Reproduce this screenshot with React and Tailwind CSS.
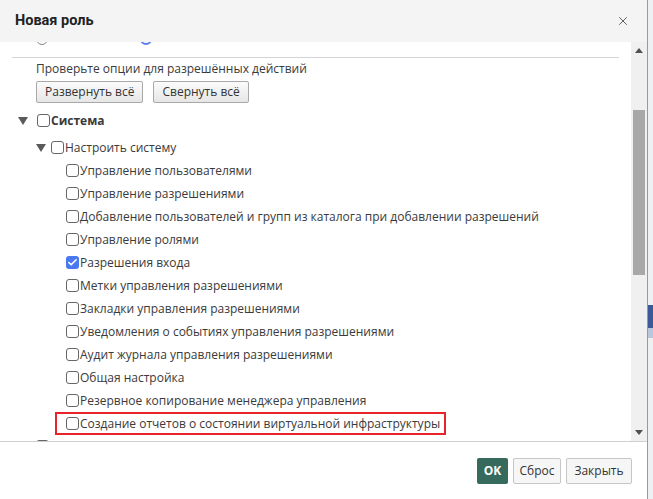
import { Check, X } from 'lucide-react'

const items = [
  { label: 'Управление пользователями' },
  { label: 'Управление разрешениями' },
  { label: 'Добавление пользователей и групп из каталога при добавлении разрешений' },
  { label: 'Управление ролями' },
  { label: 'Разрешения входа', checked: true },
  { label: 'Метки управления разрешениями' },
  { label: 'Закладки управления разрешениями' },
  { label: 'Уведомления о событиях управления разрешениями' },
  { label: 'Аудит журнала управления разрешениями' },
  { label: 'Общая настройка' },
  { label: 'Резервное копирование менеджера управления' },
  { label: 'Создание отчетов о состоянии виртуальной инфраструктуры', marked: true },
]

function Box({ checked }) {
  if (checked) {
    return (
      <span className="flex h-[13px] w-[13px] shrink-0 items-center justify-center rounded-[3px] bg-[#4a78f0]">
        <Check size={11} strokeWidth={3.5} className="text-white" />
      </span>
    )
  }
  return <span className="block h-[13px] w-[13px] shrink-0 rounded-[3px] border border-[#666] bg-white" />
}

function Caret() {
  return (
    <svg width="10" height="8" viewBox="0 0 10 8" className="shrink-0">
      <path d="M0 0 L10 0 L5 8 Z" fill="#5a5a5a" />
    </svg>
  )
}

export default function App() {
  return (
    <div className="flex h-[499px] w-[653px] bg-[#eef0f2] font-['Open_Sans',sans-serif] text-[12px] text-[#3a3a3a]">
      <div className="flex w-[648px] flex-col border-r border-[#9a9a9a] bg-white">
        <header className="flex h-[42px] shrink-0 items-center justify-between bg-[#f4f4f4] pl-[15px] pr-[17px]">
          <h1 className="font-['Roboto',sans-serif] text-[14.5px] font-bold text-[#222]">Новая роль</h1>
          <X size={14} strokeWidth={1.6} className="text-[#555]" />
        </header>

        <div className="flex min-h-0 flex-1">
          <div className="min-w-0 flex-1 overflow-hidden">
            <div className="mx-[12px] flex h-[16px] items-start gap-[92px] overflow-hidden border-b border-[#d4d4d8] pl-[24px]">
              <div className="mt-[-9px] h-[12px] w-[12px] shrink-0 rounded-full border border-[#888]" />
              <div className="mt-[-9px] h-[12px] w-[12px] shrink-0 rounded-full border-2 border-[#5a7cf0]" />
            </div>

            <div className="pl-[36px]">
              <p className="mt-[2px] leading-[18px]">Проверьте опции для разрешённых действий</p>
              <div className="mt-[3px] flex gap-[10px]">
                <button className="h-[22px] rounded-[2px] border border-[#a9a9a9] bg-gradient-to-b from-[#fbfbfb] to-[#e6e6e6] px-[8px] text-[12px] text-[#333]">
                  Развернуть всё
                </button>
                <button className="h-[22px] rounded-[2px] border border-[#a9a9a9] bg-gradient-to-b from-[#fbfbfb] to-[#e6e6e6] px-[8px] text-[12px] text-[#333]">
                  Свернуть всё
                </button>
              </div>
            </div>

            <div className="mt-[6px]">
              <div className="flex h-[23px] items-center pl-[18px]">
                <Caret />
                <span className="ml-[9px] flex"><Box /></span>
                <span className="ml-[1px] font-bold">Система</span>
              </div>
              <div className="mt-[4px] flex h-[23px] items-center pl-[36px]">
                <Caret />
                <span className="ml-[5px] flex"><Box /></span>
                <span className="ml-[1px]">Настроить систему</span>
              </div>
              {items.map((it) => (
                <div key={it.label} className="flex h-[23px] items-center pl-[55px]">
                  <div
                    className={`flex h-[23px] items-center pr-[4px] ${
                      it.marked ? 'border-2 border-[#e8232a] pl-[9px]' : 'pl-[11px]'
                    }`}
                  >
                    <Box checked={it.checked} />
                    <span className="ml-[1px] whitespace-nowrap">{it.label}</span>
                  </div>
                </div>
              ))}
              <div className="mt-[5px] pl-[36px]">
                <Box />
              </div>
            </div>
          </div>

          <div className="flex w-[16px] shrink-0 flex-col items-center bg-[#f0f0f0] py-[5px]">
            <svg width="8" height="5" viewBox="0 0 8 5" className="mt-[1px]">
              <path d="M0 5 L4 0 L8 5 Z" fill="#505050" />
            </svg>
            <div className="mt-[57px] h-[165px] w-[12px] bg-[#a8a8a8]" />
            <div className="flex-1" />
            <svg width="8" height="5" viewBox="0 0 8 5" className="mb-[1px]">
              <path d="M0 0 L8 0 L4 5 Z" fill="#505050" />
            </svg>
          </div>
        </div>

        <footer className="flex h-[58px] shrink-0 items-center justify-end gap-[5px] border-t border-[#d0d0d0] pr-[15px]">
          <button className="h-[26px] w-[31px] rounded-[2px] bg-[#356a5c] text-[12px] font-bold text-white">OK</button>
          <button className="h-[26px] w-[48px] rounded-[2px] border border-[#c6c6c6] bg-[#f6f6f6] text-[12px] text-[#333]">Сброс</button>
          <button className="h-[26px] w-[66px] rounded-[2px] border border-[#c6c6c6] bg-[#f6f6f6] text-[12px] text-[#333]">Закрыть</button>
        </footer>
      </div>

      <div className="flex flex-1 flex-col">
        <div className="h-[305px]" />
        <div className="h-[23px] bg-[#3a5a9a]" />
        <div className="h-[10px] bg-[#b8c6de]" />
      </div>
    </div>
  )
}
